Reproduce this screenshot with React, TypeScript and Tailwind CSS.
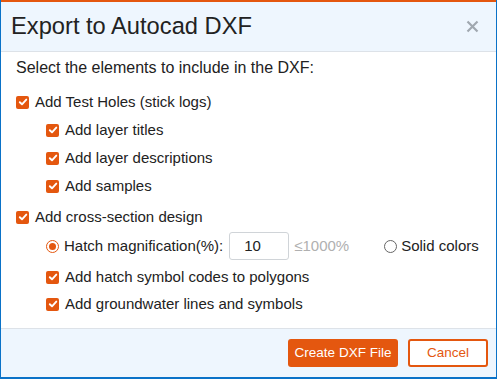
import React from "react";

function Check() {
  return (
    <span className="flex h-[13px] w-[13px] shrink-0 items-center justify-center rounded-[2px] bg-[#e4570f]">
      <svg width="10" height="10" viewBox="0 0 10 10">
        <path d="M1.8 5.2 L4 7.3 L8.3 2.6" fill="none" stroke="#fff" strokeWidth="1.9" strokeLinecap="round" strokeLinejoin="round" />
      </svg>
    </span>
  );
}

function Row({ label, indent, h = "h-[28px]" }: { label: string; indent?: boolean; h?: string }) {
  return (
    <div className={`flex ${h} items-center gap-[6px] ${indent ? "pl-[30px]" : ""}`}>
      <Check />
      <span>{label}</span>
    </div>
  );
}

export default function App() {
  return (
    <div
      className="flex h-[379px] w-[497px] flex-col border-x border-b-2 border-[#0a72c8] bg-white text-[15px] text-[#222]"
      style={{ fontFamily: '"Liberation Sans", Arial, sans-serif' }}
    >
      <div className="h-[2px] shrink-0 bg-[#e4570f]" />
      <div className="flex h-[50px] shrink-0 items-center justify-between border-b border-[#dde2e8] bg-[#eef6fe] pl-[10px] pr-[17px]">
        <span className="text-[23.7px] text-[#222]">Export to Autocad DXF</span>
        <svg width="13" height="13" viewBox="0 0 13 13">
          <path d="M1.5 1.5 L11.5 11.5 M11.5 1.5 L1.5 11.5" stroke="#a0a8b0" strokeWidth="2.2" />
        </svg>
      </div>
      <div className="flex flex-1 flex-col pl-[15px] pt-[4px]">
        <div className="flex h-[24px] items-center text-[16px]">Select the elements to include in the DXF:</div>
        <div className="h-[8px]" />
        <Row label="Add Test Holes (stick logs)" />
        <Row label="Add layer titles" indent />
        <Row label="Add layer descriptions" indent />
        <Row label="Add samples" indent />
        <div className="h-[3px]" />
        <Row label="Add cross-section design" />
        <div className="flex h-[30px] items-center pl-[30px]">
          <span className="flex h-[13px] w-[13px] shrink-0 items-center justify-center rounded-full border-[1.5px] border-[#e4570f] bg-white">
            <span className="h-[7px] w-[7px] rounded-full bg-[#e4570f]" />
          </span>
          <span className="ml-[5px]">Hatch magnification(%):</span>
          <span className="ml-[6px] flex h-[28px] w-[60px] items-center rounded-[3px] border border-[#d0d4d8] pl-[14px]">10</span>
          <span className="ml-[5px] text-[#b0b0b0]">≤1000%</span>
          <span className="ml-[35px] h-[13px] w-[13px] shrink-0 rounded-full border border-[#666]" />
          <span className="ml-[4px]">Solid colors</span>
        </div>
        <div className="h-[2px]" />
        <Row label="Add hatch symbol codes to polygons" indent />
        <Row label="Add groundwater lines and symbols" indent h="h-[26px]" />
      </div>
      <div className="flex h-[49px] shrink-0 items-center justify-end gap-[10px] border-t border-[#dde2e8] bg-[#eef6fe] pr-[8px]">
        <button className="h-[28px] w-[110px] rounded-[3px] bg-[#e4570f] text-[13.5px] text-white">Create DXF File</button>
        <button className="h-[28px] w-[80px] rounded-[3px] border-2 border-[#e4570f] bg-white text-[13.5px] text-[#e4570f]">Cancel</button>
      </div>
    </div>
  );
}
